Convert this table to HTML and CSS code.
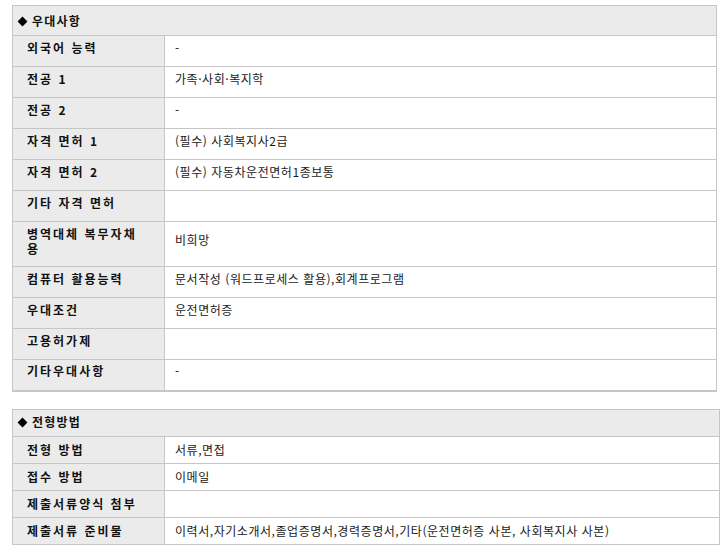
FILE: index.html
```html
<!DOCTYPE html>
<html lang="ko">
<head>
<meta charset="utf-8">
<link rel="stylesheet" href="styles.css">
</head>
<body>
<div class="page">
  <table class="info info-a">
    <colgroup><col class="col-label"><col></colgroup>
    <tr class="head"><th colspan="2"><span class="dia"></span>우대사항</th></tr>
    <tr><th>외국어 능력</th><td>-</td></tr>
    <tr><th>전공 1</th><td>가족·사회·복지학</td></tr>
    <tr><th>전공 2</th><td>-</td></tr>
    <tr><th>자격 면허 1</th><td>(필수) 사회복지사2급</td></tr>
    <tr><th>자격 면허 2</th><td>(필수) 자동차운전면허1종보통</td></tr>
    <tr><th>기타 자격 면허</th><td></td></tr>
    <tr class="tall"><th>병역대체 복무자채용</th><td>비희망</td></tr>
    <tr><th>컴퓨터 활용능력</th><td>문서작성 (워드프로세스 활용),회계프로그램</td></tr>
    <tr><th>우대조건</th><td>운전면허증</td></tr>
    <tr><th>고용허가제</th><td></td></tr>
    <tr><th>기타우대사항</th><td>-</td></tr>
  </table>

  <table class="info info-b">
    <colgroup><col class="col-label"><col></colgroup>
    <tr class="head"><th colspan="2"><span class="dia"></span>전형방법</th></tr>
    <tr><th>전형 방법</th><td>서류,면접</td></tr>
    <tr><th>접수 방법</th><td>이메일</td></tr>
    <tr><th>제출서류양식 첨부</th><td></td></tr>
    <tr><th>제출서류 준비물</th><td>이력서,자기소개서,졸업증명서,경력증명서,기타(운전면허증 사본, 사회복지사 사본)</td></tr>
  </table>
</div>
</body>
</html>
```

FILE: styles.css
```css
html, body {
  margin: 0;
  padding: 0;
  background: #ffffff;
}
body {
  font-family: "Noto Sans CJK KR", "Noto Sans", "DejaVu Sans", sans-serif;
  font-size: 12px;
  color: #1a1a1a;
}
.page {
  padding: 5px 0 0 12px;
}
.info {
  border-collapse: collapse;
  table-layout: fixed;
}
.col-label {
  width: 152px;
}
.info th, .info td {
  border: 1px solid #c6c6c6;
  text-align: left;
  vertical-align: middle;
  padding: 0;
  line-height: 13px;
}
.info th {
  background: #ebebeb;
  font-weight: bold;
  color: #111;
  padding-left: 14px;
  padding-right: 22px;
  letter-spacing: 2px;
}
.info td {
  background: #fff;
  padding-left: 10px;
  color: #1a1a1a;
  letter-spacing: 0.55px;
}
.info .head th {
  padding-left: 6px;
  letter-spacing: 1.2px;
}
.dia {
  display: inline-block;
  width: 7px;
  height: 7px;
  background: #000;
  transform: rotate(45deg);
  margin: 0 6px 1px 0;
  vertical-align: middle;
}
.info-a {
  width: 705px;
}
.info-a tr {
  height: 31px;
}
.info-a tr th,
.info-a tr td {
  padding-bottom: 8px;
}
.info-a .head {
  height: 30px;
}
.info-a .head th {
  padding-bottom: 1px;
}
.info-a .tall {
  height: 45px;
}
.info-a .tall th {
  line-height: 15px;
  padding-bottom: 6px;
}
.info-a .tall td {
  padding-bottom: 9px;
}
.info-a tr:last-child th,
.info-a tr:last-child td {
  border-bottom: 2px solid #c6c6c6;
}
.info-b {
  width: 708px;
  margin-top: 17px;
}
.info-b tr {
  height: 27px;
}
.info-b .head {
  height: 27px;
}
.info-b .head th {
  padding-bottom: 3px;
}
```
